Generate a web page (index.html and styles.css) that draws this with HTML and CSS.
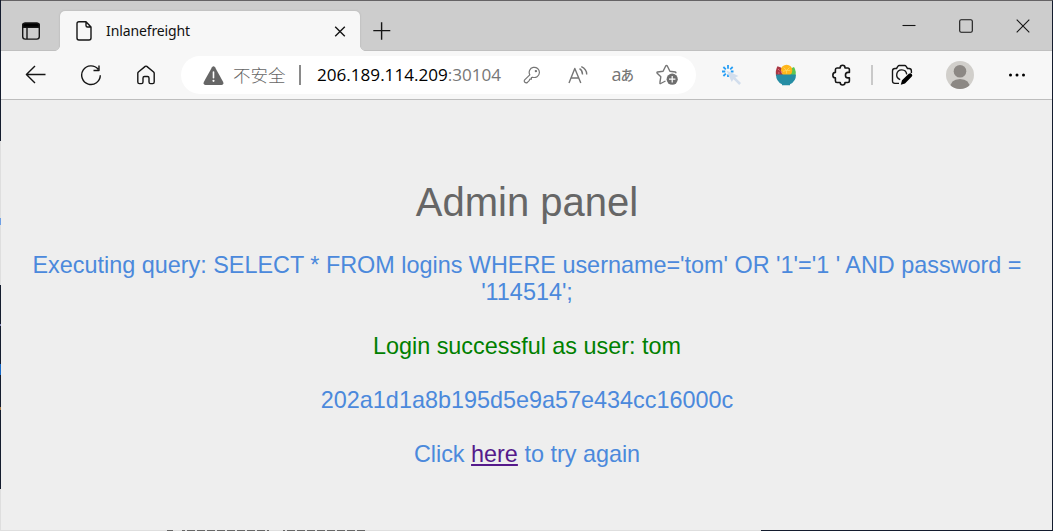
FILE: index.html
```html
<!DOCTYPE html>
<html lang="zh-CN">
<head>
<meta charset="utf-8">
<title>Inlanefreight</title>
<link rel="stylesheet" href="styles.css">
</head>
<body>
<div class="window">
  <header class="tabbar">
    <div class="tab-menu">
      <svg class="icon" width="20" height="20" viewBox="0 0 20 20"><rect x="1.7" y="2.1" width="16.6" height="16" rx="2.6"/><path d="M1.7 6.2V4.6Q1.7 2.1 4.3 2.1H15.7Q18.3 2.1 18.3 4.6V6.2Z" fill="#000"/><path d="M6 6V18"/></svg>
    </div>
    <div class="tab">
      <svg class="icon" width="18" height="22" viewBox="0 0 18 22"><path d="M11 1.7H4Q2 1.7 2 3.7V18Q2 20 4 20H14Q16 20 16 18V7L11 1.7V5.5Q11 7 12.5 7H16"/></svg>
      <span class="tab-title">Inlanefreight</span>
      <svg class="icon" width="12" height="12" viewBox="0 0 12 12"><path d="M1.2 1.7L10.8 11.3M10.8 1.7L1.2 11.3"/></svg>
    </div>
    <svg class="icon new-tab" width="18" height="18" viewBox="0 0 18 18"><path d="M8.6 .3V17.7M.3 8.6H17.3"/></svg>
    <div class="controls">
      <svg class="icon thin" width="14" height="14" viewBox="0 0 14 14"><path d="M.5 6.5H13.5"/></svg>
      <svg class="icon thin" width="14" height="14" viewBox="0 0 14 14"><rect x=".7" y=".7" width="12.6" height="12.6" rx="1.5"/></svg>
      <svg class="icon thin" width="14" height="14" viewBox="0 0 14 14"><path d="M.7 .7L13.3 13.3M13.3 .7L.7 13.3"/></svg>
    </div>
  </header>

  <nav class="toolbar">
    <div class="slot"><svg class="icon" width="22" height="20" viewBox="0 0 22 20"><path d="M20.5 9.5H1.5M10 1L1.4 9.5L10 18"/></svg></div>
    <div class="slot"><svg class="icon" width="22" height="22" viewBox="0 0 22 22"><path d="M18.2 5.3A9.3 9.3 0 1 0 20.3 11.3M19 1.5V6.5H13.5"/></svg></div>
    <div class="slot"><svg class="icon" width="20" height="20" viewBox="0 0 20 20"><path d="M1.8 8.3Q1.8 7.6 2.4 7L9.2 1.4Q10 .8 10.8 1.4L17.6 7Q18.2 7.6 18.2 8.3V17Q18.2 18.6 16.6 18.6H14.6Q13 18.6 13 17V13Q13 11.5 11.5 11.5H8.5Q7 11.5 7 13V17Q7 18.6 5.4 18.6H3.4Q1.8 18.6 1.8 17Z"/></svg></div>

    <div class="address">
      <svg class="warning" width="21" height="19" viewBox="0 0 21 19"><path d="M9 1.2Q10.5-.7 12 1.2L20.2 16Q21 18.7 18.6 19H2.4Q0 18.7.8 16Z" fill="#666"/><path d="M10.5 6V11.8" stroke="#fff" stroke-width="1.6" stroke-linecap="round"/><circle cx="10.5" cy="14.8" r="1.1" fill="#fff"/></svg>
      <span class="insecure">不安全</span>
      <span class="bar"></span>
      <span class="url">206.189.114.209<span class="port">:30104</span></span>
      <div class="actions">
        <span class="action key"><svg class="icon gray" width="18" height="18" viewBox="0 0 18 18"><path d="M6.8 8.8A5.1 5.1 0 1 1 9.6 11.2L8.4 11.6V13.2H6.8L6.2 14.6L4.6 16.2Q3.2 17.5 1.9 16.3Q.6 15 1.9 13.7Z"/><circle cx="12.9" cy="5.1" r=".6" fill="#757575"/></svg></span>
        <span class="action"><svg class="icon gray" width="20" height="19" viewBox="0 0 20 19"><path d="M1 17L6.8 2.5L12.8 17M3.1 12H10.7M11.5 2.7Q14.6 4.5 14.5 8.5M13.3.6Q18.8 3.1 18.7 8.5" stroke-width="1.4"/></svg></span>
        <span class="action translate">a<span class="kana">あ</span></span>
        <span class="action"><svg class="icon gray" width="23" height="22" viewBox="0 0 23 22"><path d="M9.5 17L4.7 19.5Q3.7 19.8 3.9 18.7L4.8 12.8L1.2 9.2Q.5 8.3 1.6 8L7.1 7.2L9.7 2Q10.5 1 11.3 2L13.9 7.2L19.3 8Q20.4 8.3 19.5 9.2" stroke-width="1.4"/><circle cx="16.2" cy="15.2" r="5.6" fill="#6e6e6e" stroke="none"/><path d="M16.2 12V18.4M13 15.2H19.4" stroke="#fff"/></svg></span>
      </div>
    </div>

    <div class="slot"><svg width="20" height="20" viewBox="0 0 20 20"><g stroke="#249df5" stroke-width="1.8"><path d="M7 0V3.8M7 9.5V12M1 6.5H4.3M9.8 6.5H12.5M2.4 2L4.8 4.3M9.2 4.3L11.7 2M2.4 11L4.8 8.7"/></g><path d="M5.5 5.5L17.5 11L14.3 12.4L20 18L18.2 20L12.5 14.2L10.7 17Z" fill="#d2deed"/></svg></div>
    <div class="slot"><svg width="22" height="22" viewBox="0 0 22 22"><path d="M1 12Q.2 6 2.5 2.2Q10 4 12 12Z" fill="#a93643"/><path d="M13 12Q13 5 19 3Q22 8 20 12Z" fill="#5bc653"/><circle cx="11.6" cy="6.4" r="5.7" fill="#ffb619"/><path d="M11.6 6.4L8.6 3.5M11.6 6.4L14.5 3.5M11.6 6.4L8 7.3M11.6 6.4H15.3M11.6 6.4V9.5" stroke="#ffdf6f" stroke-width=".7"/><path d="M3 5L4.5 6.5M3 9H4.5M6 7L7 9" stroke="#df7882"/><path d="M1 10.5H21Q21 17.5 15 20.2V21.3H7V20.2Q1 17.5 1 10.5Z" fill="#258da4"/></svg></div>
    <div class="slot puzzle-slot"><svg class="icon puzzle" width="20" height="22" viewBox="0 0 20 22"><path d="M5 4H8.2V3.8A2.4 2.5 0 0 1 13 3.8V4H15.7Q17.4 4 17.4 5.7V8.4H16A2.5 2.7 0 0 0 16 13.9H17.4V16.8Q17.4 18.5 15.7 18.5H13A2.4 2.5 0 0 1 8.2 18.5H5Q3.4 18.5 3.4 16.8V13.9A2.5 2.7 0 0 1 3.4 8.4V5.7Q3.4 4 5 4Z"/></svg></div>
    <span class="divider"></span>
    <div class="slot wide"><svg class="icon" width="22" height="22" viewBox="0 0 22 22"><path d="M8 19.4H4Q1.5 19.4 1.5 17V7Q1.5 4.5 4 4.5H5.5L7 2.2Q7.4 1.5 8.2 1.5H13.8Q14.6 1.5 15 2.2L16.5 4.5H18Q20.4 4.5 20.4 7V9M9.2 15.6A5 5 0 1 1 15.7 10.3"/><path d="M9.8 20.8L11 16.3L17.8 9.7Q19.6 8.5 20.7 9.9Q22 11.4 20.6 12.8L14 19.5Z" fill="#000" stroke="none"/></svg></div>
    <div class="slot wide"><svg width="28" height="28" viewBox="0 0 28 28"><defs><clipPath id="avatar"><circle cx="14" cy="14" r="14"/></clipPath></defs><g clip-path="url(#avatar)"><rect width="28" height="28" fill="#d1cfcb"/><circle cx="14" cy="10.3" r="6.3" fill="#8c8884"/><path d="M4 28Q4 18 14 18Q24 18 24 28Z" fill="#8c8884"/></g></svg></div>
    <div class="slot"><svg width="18" height="4" viewBox="0 0 18 4"><circle cx="2.5" cy="2" r="1.5"/><circle cx="9" cy="2" r="1.5"/><circle cx="15.5" cy="2" r="1.5"/></svg></div>
  </nav>

  <main class="page">
    <h1>Admin panel</h1>
    <p>Executing query: SELECT * FROM logins WHERE username='tom' OR '1'='1 ' AND password = '114514';</p>
    <p class="success">Login successful as user: tom</p>
    <p>202a1d1a8b195d5e9a57e434cc16000c</p>
    <p>Click <a href="#">here</a> to try again</p>
  </main>
  <span class="left-edge"></span>
  <span class="bottom-edge"></span>
  <span class="bottom-marks"></span>
</div>
</body>
</html>
```
FILE: styles.css
```css
* { box-sizing: border-box; }

body {
  margin: 0;
  overflow: hidden;
}

.window {
  position: relative;
  display: flex;
  flex-direction: column;
  width: 1053px;
  height: 531px;
  border: 1px solid #dedede;
  border-top-color: #656365;
  border-right-color: #141c2e;
  background: #eee;
  font-family: "Open Sans", "Noto Sans CJK SC", sans-serif;
}

.icon {
  flex: none;
  fill: none;
  stroke: #151515;
  stroke-width: 1.4;
  stroke-linejoin: round;
}

.icon.gray { stroke: #757575; stroke-width: 1.2; }
.icon.thin { stroke-width: 1.1; }

.tabbar {
  display: flex;
  height: 50px;
  background: #cdcdcd;
  box-shadow: inset 0 -1px #c0c0c0;
}

.tab-menu { width: 59px; padding: 20px 0 0 20px; }

.tab {
  position: relative;
  display: flex;
  align-items: center;
  width: 300px;
  margin-top: 10px;
  padding: 0 14px 0 15px;
  border-radius: 5px 5px 0 0;
  background: #f7f7f7;
  box-shadow: 0 0 2px #aaa;
  clip-path: inset(-3px -6px 0 -6px);
}

.tab::before,
.tab::after {
  content: "";
  position: absolute;
  bottom: 0;
  width: 5px;
  height: 5px;
}

.tab::before { left: -5px; background: radial-gradient(circle at 0 0, transparent 4.5px, #f7f7f7 5px); }
.tab::after { right: -5px; background: radial-gradient(circle at 100% 0, transparent 4.5px, #f7f7f7 5px); }

.tab-title {
  flex: 1;
  padding-left: 13px;
  color: #111;
  font-family: "Noto Sans", "Open Sans", sans-serif;
  font-size: 14px;
  letter-spacing: -0.12px;
  line-height: 20px;
}

.new-tab { margin: 21px 0 0 13px; }

.controls {
  display: flex;
  gap: 43px;
  margin: 18px 22px 0 auto;
}

.toolbar {
  display: flex;
  align-items: center;
  height: 49px;
  padding-left: 7px;
  border-bottom: 1px solid #bdbdbd;
  background: #f7f7f7;
}

.slot {
  display: flex;
  flex: none;
  align-items: center;
  justify-content: center;
  width: 55px;
}

.slot.wide { width: 58px; }
.puzzle-slot { width: 58px; padding-right: 1px; }
.puzzle { stroke-width: 1.6; }

.address {
  display: flex;
  flex: none;
  align-items: center;
  width: 515px;
  height: 38px;
  margin: 0 7px 0 8px;
  padding: 0 0 0 22px;
  border-radius: 19px;
  background: #fff;
  white-space: nowrap;
}

.insecure {
  width: 54px;
  margin-left: 9px;
  color: #666;
  font-family: "Noto Sans CJK SC", sans-serif;
  font-size: 17.5px;
  font-weight: 300;
  line-height: 24px;
}

.bar { width: 2px; height: 20px; margin: 0 16px 0 12px; background: #8a8a8a; }
.url { color: #000; font-size: 17.1px; line-height: 24px; }
.port { color: #777; }

.actions {
  display: flex;
  flex: none;
  align-items: center;
  margin-left: 9px;
}

.action {
  display: flex;
  flex: none;
  align-items: center;
  justify-content: center;
  width: 45px;
}

.key { padding-right: 2px; }

.translate {
  align-items: center;
  color: #757575;
  font-size: 18px;
  line-height: 20px;
  padding-bottom: 2px;
}

.kana {
  margin-left: -1px;
  font-family: "Noto Sans CJK JP", sans-serif;
  font-size: 13.5px;
  font-weight: 500;
  line-height: 20px;
}

.divider { flex: none; width: 2px; height: 20px; background: #c9c9c9; }

.page {
  flex: 1;
  padding: 78px 24px 0 25px;
  font-family: "Liberation Sans", Arial, sans-serif;
  color: #4b89dc;
  text-align: center;
}

h1 {
  margin: 0 0 26px;
  color: #666;
  font-size: 40px;
  font-weight: 400;
  line-height: 48px;
}

p {
  margin: 0 0 27px;
  font-size: 23.4px;
  line-height: 27px;
}

.success { color: #008000; }
a { color: #551a8b; }

.left-edge {
  position: absolute;
  top: -1px;
  left: -1px;
  width: 1px;
  height: 531px;
  background: linear-gradient(#141c2e 141px, #dedede 141px 218px, #6e9fe4 218px 225px, #dedede 225px 285px, #141c2e 285px 324px, #8789b8 324px 326px, #141c2e 326px 364px, #1769c7 364px 375px, #141c2e 375px 407px, #a77945 407px 410px, #141c2e 410px 489px, #dedede 489px);
}

.bottom-edge {
  position: absolute;
  bottom: -1px;
  left: 760px;
  width: 292px;
  height: 1px;
  background: #141c2e;
}

.bottom-marks {
  position: absolute;
  bottom: -1px;
  left: 166px;
  width: 200px;
  height: 1px;
  background:
    linear-gradient(90deg, transparent 6px, #dedede 6px 15px, transparent 15px 102px, #dedede 102px 116px, transparent 116px),
    repeating-linear-gradient(90deg, #666 0 8px, #dedede 8px 10px);
}
```
